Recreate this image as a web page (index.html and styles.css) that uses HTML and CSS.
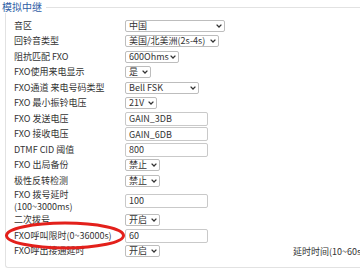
FILE: index.html
```html
<!DOCTYPE html>
<html lang="zh-cn">
<head>
  <meta charset="utf-8">
  <title>模拟中继</title>
  <meta name="viewport" content="width=device-width, initial-scale=1.0">
  <link rel="stylesheet" href="styles.css">
</head>
<body>
  <div class="panel">
    <div class="panel-title"><span>模拟中继</span></div>
    <div class="panel-body">
      <div class="row">
        <label>音区</label>
        <span class="select sel-zone">
          <select><option>中国</option></select>
          <svg class="caret" width="6" height="4" viewBox="0 0 6 4"><path d="M0.6 0.6 L3 3 L5.4 0.6" fill="none" stroke="#333" stroke-width="1.3"/></svg>
        </span>
      </div>
      <div class="row">
        <label>回铃音类型</label>
        <span class="select sel-ring">
          <select><option>美国/北美洲(2s-4s)</option></select>
          <svg class="caret" width="6" height="4" viewBox="0 0 6 4"><path d="M0.6 0.6 L3 3 L5.4 0.6" fill="none" stroke="#333" stroke-width="1.3"/></svg>
        </span>
      </div>
      <div class="row">
        <label>阻抗匹配 FXO</label>
        <span class="select sel-ohm">
          <select><option>600Ohms</option></select>
          <svg class="caret" width="6" height="4" viewBox="0 0 6 4"><path d="M0.6 0.6 L3 3 L5.4 0.6" fill="none" stroke="#333" stroke-width="1.3"/></svg>
        </span>
      </div>
      <div class="row">
        <label>FXO使用来电显示</label>
        <span class="select sel-yes">
          <select><option>是</option></select>
          <svg class="caret" width="6" height="4" viewBox="0 0 6 4"><path d="M0.6 0.6 L3 3 L5.4 0.6" fill="none" stroke="#333" stroke-width="1.3"/></svg>
        </span>
      </div>
      <div class="row">
        <label>FXO通道 来电号码类型</label>
        <span class="select sel-fsk">
          <select><option>Bell FSK</option></select>
          <svg class="caret" width="6" height="4" viewBox="0 0 6 4"><path d="M0.6 0.6 L3 3 L5.4 0.6" fill="none" stroke="#333" stroke-width="1.3"/></svg>
        </span>
      </div>
      <div class="row">
        <label>FXO 最小振铃电压</label>
        <span class="select sel-volt">
          <select><option>21V</option></select>
          <svg class="caret" width="6" height="4" viewBox="0 0 6 4"><path d="M0.6 0.6 L3 3 L5.4 0.6" fill="none" stroke="#333" stroke-width="1.3"/></svg>
        </span>
      </div>
      <div class="row">
        <label>FXO 发送电压</label>
        <input type="text" value="GAIN_3DB">
      </div>
      <div class="row">
        <label>FXO 接收电压</label>
        <input type="text" value="GAIN_6DB">
      </div>
      <div class="row">
        <label>DTMF CID 阈值</label>
        <input type="text" value="800">
      </div>
      <div class="row">
        <label>FXO 出局备份</label>
        <span class="select sel-short">
          <select><option>禁止</option></select>
          <svg class="caret" width="6" height="4" viewBox="0 0 6 4"><path d="M0.6 0.6 L3 3 L5.4 0.6" fill="none" stroke="#333" stroke-width="1.3"/></svg>
        </span>
      </div>
      <div class="row">
        <label>极性反转检测</label>
        <span class="select sel-short">
          <select><option>禁止</option></select>
          <svg class="caret" width="6" height="4" viewBox="0 0 6 4"><path d="M0.6 0.6 L3 3 L5.4 0.6" fill="none" stroke="#333" stroke-width="1.3"/></svg>
        </span>
      </div>
      <div class="row row-tall">
        <label>FXO 拨号延时<br>(100~3000ms)</label>
        <input type="text" value="100">
      </div>
      <div class="row">
        <label>二次拨号</label>
        <span class="select sel-short">
          <select><option>开启</option></select>
          <svg class="caret" width="6" height="4" viewBox="0 0 6 4"><path d="M0.6 0.6 L3 3 L5.4 0.6" fill="none" stroke="#333" stroke-width="1.3"/></svg>
        </span>
      </div>
      <div class="row">
        <label>FXO呼叫限时(0~36000s)</label>
        <input type="text" value="60">
      </div>
      <div class="row">
        <label>FXO呼出接通延时</label>
        <span class="select sel-short">
          <select><option>开启</option></select>
          <svg class="caret" width="6" height="4" viewBox="0 0 6 4"><path d="M0.6 0.6 L3 3 L5.4 0.6" fill="none" stroke="#333" stroke-width="1.3"/></svg>
        </span>
        <span class="note">延时时间(10~60s)</span>
      </div>

      <svg class="mark" width="124" height="32" viewBox="0 0 124 32">
        <ellipse cx="62" cy="15.5" rx="58.5" ry="12.5" fill="none" stroke="#e3201b" stroke-width="3"/>
      </svg>
    </div>
  </div>
</body>
</html>
```

FILE: styles.css
```css
* {
  box-sizing: border-box;
}

html, body {
  overflow: hidden;
}

body {
  margin: 0;
  background-color: #fff;
  color: #333;
  font-family: "Noto Sans CJK SC", sans-serif;
  font-size: 9px;
}

.panel {
  width: 440px;
}

.panel-title {
  display: flex;
  align-items: center;
  height: 13px;
  padding: 1px 0 0 2px;
}

.panel-title span {
  color: #2f5ea6;
  font-size: 10px;
  line-height: 12px;
}

.panel-title::after {
  content: "";
  flex: 1;
  margin-left: 4px;
  border-top: 1px solid #e2e2e2;
}

.panel-body {
  position: relative;
  margin-left: 5px;
  padding: 5px 0 8px 8px;
  border-left: 1px solid #e2e2e2;
  border-bottom: 1px solid #e2e2e2;
  border-bottom-left-radius: 3px;
}

.row {
  display: grid;
  grid-template-columns: 111px 168px auto;
  align-items: center;
  height: 15.5px;
}

.row-tall {
  height: 24px;
}

.row label {
  line-height: 14px;
  white-space: nowrap;
}

.row-tall label {
  line-height: 12px;
}

input {
  width: 83px;
  height: 14px;
  padding: 0 3px;
  border: 1px solid #c9c9c9;
  border-radius: 2px;
  color: #333;
  font-family: inherit;
  font-size: 9px;
  line-height: 12px;
}

.select {
  position: relative;
  display: block;
  height: 12px;
}

.select select {
  appearance: none;
  display: block;
  width: 100%;
  height: 12px;
  margin: 0;
  padding: 0 9px 0 3px;
  border: 1px solid #bdbdbd;
  border-radius: 2px;
  background-color: #fff;
  color: #333;
  font-family: inherit;
  font-size: 9px;
  line-height: 10px;
}

.caret {
  position: absolute;
  right: 3px;
  top: 4px;
}

.sel-zone {
  width: 100px;
}

.sel-ring {
  width: 94px;
}

.sel-ohm {
  width: 54px;
}

.sel-yes {
  width: 26px;
}

.sel-fsk {
  width: 74px;
}

.sel-volt {
  width: 32px;
}

.sel-short {
  width: 35px;
}

.note {
  white-space: nowrap;
}

.mark {
  position: absolute;
  left: -3px;
  top: 207px;
}
```
